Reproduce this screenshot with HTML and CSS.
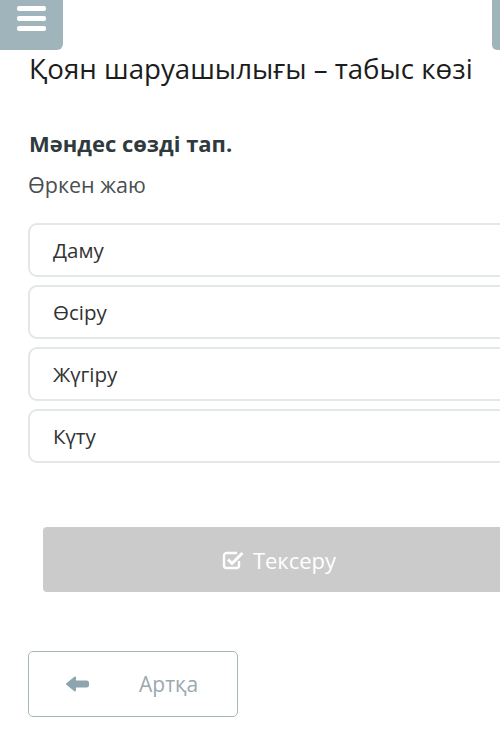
FILE: index.html
```html
<!DOCTYPE html>
<html>
<head>
<meta charset="utf-8">
<link rel="stylesheet" href="styles.css">
</head>
<body>
<div class="page">
  <header class="topbar">
    <div class="menu-btn">
      <span class="bar"></span><span class="bar"></span><span class="bar"></span>
    </div>
    <div class="side-btn"></div>
  </header>
  <main class="content">
    <h1 class="title">Қоян шаруашылығы – табыс көзі</h1>
    <p class="question">Мәндес сөзді тап.</p>
    <p class="prompt">Өркен жаю</p>
    <div class="options">
      <div class="option">Даму</div>
      <div class="option">Өсіру</div>
      <div class="option">Жүгіру</div>
      <div class="option">Күту</div>
    </div>
    <div class="check-wrap">
      <button class="check-btn">
        <svg class="check-icon" width="22" height="20" viewBox="0 0 22 20">
          <path d="M15 3H4.5A2.5 2.5 0 0 0 2 5.5v10A2.5 2.5 0 0 0 4.5 18h10a2.5 2.5 0 0 0 2.5-2.5V11" fill="none" stroke="#fff" stroke-width="2.4"/>
          <path d="M6 9.5l4 4L20.5 3" fill="none" stroke="#fff" stroke-width="3"/>
        </svg>
        <span>Тексеру</span>
      </button>
    </div>
    <button class="back-btn">
      <svg class="back-icon" width="24" height="18" viewBox="0 0 24 18">
        <path d="M2 9L10 2.5V6.5H21.5A1.5 1.5 0 0 1 23 8V10A1.5 1.5 0 0 1 21.5 11.5H10V15.5Z" fill="#8ea5ae" stroke="#8ea5ae" stroke-width="2" stroke-linejoin="round"/>
      </svg>
      <span>Артқа</span>
    </button>
  </main>
</div>
</body>
</html>
```

FILE: styles.css
```css
* { box-sizing: border-box; }
html, body {
  margin: 0;
  padding: 0;
  background: #fff;
  overflow: hidden;
}
body {
  font-family: "Open Sans", "Noto Sans", sans-serif;
  width: 500px;
  height: 753px;
}
.page {
  width: 500px;
  overflow: hidden;
}
.topbar {
  height: 50px;
  display: flex;
  justify-content: space-between;
}
.menu-btn {
  width: 63px;
  height: 50px;
  background: #a0b4bc;
  border-bottom-right-radius: 6px;
  display: flex;
  flex-direction: column;
  align-items: center;
  padding-top: 6px;
  gap: 5px;
}
.bar {
  display: block;
  width: 29px;
  height: 5px;
  background: #fff;
  border-radius: 2px;
}
.side-btn {
  width: 8px;
  height: 50px;
  background: #a0b4bc;
  border-bottom-left-radius: 5px;
}
.content {
  width: 560px;
  padding-left: 28px;
}
.title {
  margin: 0;
  font-weight: 400;
  font-size: 27.7px;
  line-height: 36px;
  color: #1c1c1c;
  padding-left: 1px;
  margin-top: 0;
}
.question {
  margin: 44px 0 0;
  font-weight: 700;
  font-size: 22px;
  line-height: 26px;
  color: #2f3a3d;
  padding-left: 1px;
}
.prompt {
  margin: 15px 0 0;
  font-size: 21.5px;
  line-height: 28px;
  color: #4a4f51;
}
.options {
  margin-top: 24px;
  display: flex;
  flex-direction: column;
  gap: 8px;
}
.option {
  height: 54px;
  border: 2px solid #e2e7e7;
  border-radius: 9px;
  padding-left: 23px;
  display: flex;
  align-items: center;
  font-size: 20.5px;
  color: #333;
}
.check-wrap {
  margin-top: 64px;
  padding-left: 15px;
}
.check-btn {
  width: 470px;
  height: 65px;
  background: #cbcbcb;
  border: none;
  border-radius: 4px;
  display: flex;
  align-items: center;
  justify-content: center;
  gap: 9px;
  font-family: inherit;
  font-size: 22px;
  color: #fff;
  padding: 0 0 0 2px;
}
.check-icon { margin-top: 1px; }
.back-btn {
  margin-top: 59px;
  width: 210px;
  height: 66px;
  background: #fff;
  border: 1.5px solid #a8b7bc;
  border-radius: 5px;
  display: flex;
  align-items: center;
  padding: 0 0 0 36px;
  font-family: inherit;
  font-size: 21px;
  color: #9aa9ae;
}
.back-icon { margin-right: 50px; }
```
